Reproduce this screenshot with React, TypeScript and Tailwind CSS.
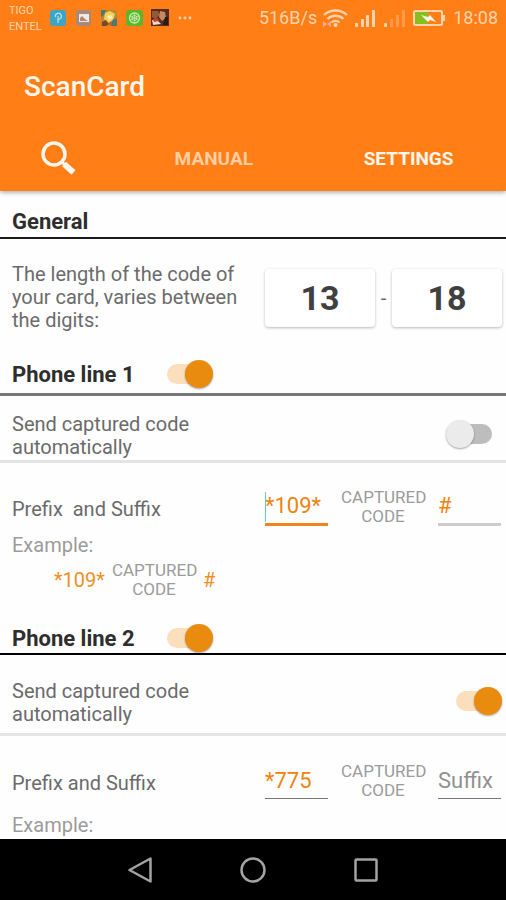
import { useState } from 'react';
import clsx from 'clsx';

interface PhoneLine {
  id: string;
  title: string;
  fieldsLabel: string;
  auto: boolean;
  prefix: string;
  suffix: string;
  focused?: boolean;
  classes: {
    header: string;
    send: string;
    sendSwitch: string;
    fields: string;
    prefix: string;
    suffix: string;
    example: string;
  };
}

const LINES: PhoneLine[] = [
  {
    id: 'line1',
    title: 'Phone line 1',
    fieldsLabel: 'Prefix  and Suffix',
    auto: false,
    prefix: '*109*',
    suffix: '#',
    focused: true,
    classes: {
      header: 'h-[41px] border-b-[3px] border-[#777777]',
      send: 'pt-[17px] pb-px',
      sendSwitch: 'mr-2.5',
      fields: 'pt-[25px]',
      prefix: 'h-[38px] border-b-[3px] border-[#f5821f]',
      suffix: 'h-[38px] border-b-[3px] border-[#cccccc]',
      example: 'pt-2',
    },
  },
  {
    id: 'line2',
    title: 'Phone line 2',
    fieldsLabel: 'Prefix and Suffix',
    auto: true,
    prefix: '*775',
    suffix: '',
    classes: {
      header: 'h-8 border-b-2 border-black',
      send: 'pt-[25px] pb-[7px]',
      sendSwitch: '',
      fields: 'pt-[26px]',
      prefix: 'h-9 border-b border-[#777777]',
      suffix: 'h-9 border-b border-[#777777]',
      example: 'pt-3.5',
    },
  },
];

function Switch({ label, on, className }: { label: string; on: boolean; className?: string }) {
  const [checked, setChecked] = useState(on);
  return (
    <input
      type="checkbox"
      role="switch"
      aria-label={label}
      checked={checked}
      onChange={(e) => setChecked(e.target.checked)}
      className={clsx(
        "relative h-7 w-[46px] shrink-0 appearance-none before:absolute before:inset-x-0 before:inset-y-1 before:rounded-full before:bg-[#bdbdbd] before:content-[''] after:absolute after:top-0 after:left-0 after:size-7 after:rounded-full after:bg-[#ebebeb] after:shadow-[0_1px_2px_rgba(0,0,0,0.35)] after:content-[''] checked:before:bg-[#fbdfbd] checked:after:left-[18px] checked:after:bg-[#e98b0e]",
        className,
      )}
    />
  );
}

function CapturedCode() {
  return (
    <span className="w-[84px] text-center text-[17px] leading-[19px] text-[#9b9b9b]">
      CAPTURED CODE
    </span>
  );
}

function PhoneLineSection({ line }: { line: PhoneLine }) {
  const [prefix, setPrefix] = useState(line.prefix);
  const [suffix, setSuffix] = useState(line.suffix);
  const c = line.classes;
  const field = 'w-full min-w-0 text-[22px] text-[#f0820f] placeholder-[#919191] outline-none';

  return (
    <section>
      <div className={clsx('flex items-center gap-8 px-3', c.header)}>
        <h2 className="text-[22px] font-bold text-[#2e2e2e]">{line.title}</h2>
        <Switch label={line.title} on />
      </div>
      <div
        className={clsx(
          'flex items-center justify-between border-b-[3px] border-[#e4e4e4] pr-1 pl-3',
          c.send,
        )}
      >
        <p className="w-[220px] text-xl leading-[23px] text-[#6b6b6b]">
          Send captured code automatically
        </p>
        <Switch
          label="Send captured code automatically"
          on={line.auto}
          className={clsx('mb-1', c.sendSwitch)}
        />
      </div>
      <div className={clsx('flex items-center justify-between pr-[5px] pl-3', c.fields)}>
        <p className="pt-1 text-xl leading-[23px] whitespace-pre text-[#6b6b6b]">
          {line.fieldsLabel}
        </p>
        <div className="flex items-center gap-[13px]">
          <div className="relative flex w-[63px]">
            <input
              aria-label={`${line.title} prefix`}
              placeholder="Prefix"
              value={prefix}
              onChange={(e) => setPrefix(e.target.value)}
              className={clsx(field, c.prefix)}
            />
            {line.focused && <span className="absolute top-1 left-0 h-[30px] w-px bg-[#5fd0c8]" />}
          </div>
          <CapturedCode />
          <div className="flex w-[63px]">
            <input
              aria-label={`${line.title} suffix`}
              placeholder="Suffix"
              value={suffix}
              onChange={(e) => setSuffix(e.target.value)}
              className={clsx(field, c.suffix)}
            />
          </div>
        </div>
      </div>
      <div className={clsx('px-3', c.example)}>
        <p className="text-xl leading-[23px] text-[#9b9b9b]">Example:</p>
        {prefix && suffix && (
          <div className="flex items-center gap-[7px] pt-1 pb-6 pl-[42px] text-xl text-[#f0901f]">
            <span>{prefix}</span>
            <CapturedCode />
            <span>{suffix}</span>
          </div>
        )}
      </div>
    </section>
  );
}

function CodeLength({ label, initial }: { label: string; initial: string }) {
  const [value, setValue] = useState(initial);
  return (
    <input
      aria-label={label}
      inputMode="numeric"
      value={value}
      onChange={(e) => setValue(e.target.value)}
      className="h-[58px] w-[110px] rounded-sm bg-white text-center text-[34px] font-bold text-[#404040] shadow-[0_1px_3px_rgba(0,0,0,0.28)] outline-none"
    />
  );
}

function StatusBar() {
  return (
    <div className="flex h-9 items-center justify-between pr-2 pl-[9px] text-[#ffd3ae]">
      <div className="flex items-center gap-2">
        <span className="w-[33px] pt-0.5 text-[11px] leading-4">
          TIGO
          <br />
          ENTEL
        </span>
        <svg viewBox="0 0 128 20" className="h-5 w-32" aria-hidden="true">
          <rect x="0" y="2" width="16" height="16" rx="3" fill="#3fa5c4" />
          <path d="M5.500 9a3 3 0 1 1 4 2l-1.500 1v3M8 8v4" fill="none" stroke="#b6e2ec" strokeWidth="1.200" />
          <rect x="26" y="2" width="15" height="16" rx="2" fill="#a98a78" />
          <rect x="29" y="6" width="10" height="8" fill="#f4e9e2" />
          <path d="M30 13v-3l2-2 3 3 3 2z" fill="#a98a78" />
          <rect x="51" y="2" width="16" height="16" fill="#b58a3d" />
          <path d="M51 2h5l-2 5-3 2zM62 12l5-2v8h-6z" fill="#4d7a6a" />
          <path d="M55 5l5-2 5 3-2 6-5 3-4-4z" fill="#f5cf57" />
          <path d="M57 8l4-1 2 3-4 2z" fill="#fce9bd" />
          <path d="M52 14l4-2 3 4-3 2h-4z" fill="#784a27" />
          <path d="M57 16l4-2 1 3z" fill="#d94f2c" />
          <rect x="76" y="2" width="17" height="16" rx="3" fill="#5cb52a" />
          <circle cx="84.500" cy="10" r="5" fill="none" stroke="#c5ecad" strokeWidth="1.300" />
          <circle cx="84.500" cy="10" r="2.500" fill="none" stroke="#c5ecad" />
          <path d="M84.500 5v10M80 8l9 4M80 12l9-4" stroke="#c5ecad" strokeWidth="0.700" />
          <rect x="101" y="1" width="18" height="17" fill="#5a2d1c" />
          <path d="M102 3h6l2 4-5 4-3-2z" fill="#92593a" />
          <path d="M110 3l5 1 1 6-4 3-3-4z" fill="#c48a66" />
          <path d="M102 12l6 1 3 3-8 1z" fill="#ecd9cd" />
          <path d="M103 11l5-1 1 3-5 1z" fill="#cf3c2c" />
          <path d="M115 9h3v8h-5z" fill="#2b1a14" />
        </svg>
        <svg viewBox="0 0 16 4" className="-ml-2 h-1 w-4" fill="currentColor" aria-hidden="true">
          <circle cx="2" cy="2" r="1.400" />
          <circle cx="7" cy="2" r="1.400" />
          <circle cx="12" cy="2" r="1.400" />
        </svg>
      </div>
      <div className="flex items-center gap-1.5 text-lg">
        <span>516B/s</span>
        <svg viewBox="0 0 124 20" className="h-5 w-[124px]" fill="none" aria-hidden="true">
          <g stroke="currentColor" strokeWidth="2.300">
            <path d="M1 7a17 17 0 0 1 23 0" />
            <path d="M4.500 11a11.500 11.500 0 0 1 16 0" />
            <path d="M8.500 14.500a6 6 0 0 1 8 0" />
          </g>
          <circle cx="12.500" cy="17" r="2" fill="currentColor" />
          <path d="M0 13l4 3-4 3z" fill="#ffa98c" />
          <path d="M8 13v6l-4-3z" fill="#ffa98c" />
          <g fill="currentColor">
            <rect x="32" y="15" width="3" height="4" rx="1" />
            <rect x="38" y="11" width="3" height="8" />
            <rect x="43" y="7" width="3" height="12" />
            <rect x="49" y="2" width="3" height="17" />
            <rect x="61" y="15" width="3" height="4" rx="1" />
          </g>
          <g fill="#ff9a4c">
            <rect x="67" y="11" width="3" height="8" />
            <rect x="73" y="7" width="3" height="12" />
            <rect x="79" y="2" width="3" height="17" />
          </g>
          <rect x="91" y="3" width="28" height="14" rx="1.500" stroke="currentColor" strokeWidth="2" />
          <rect x="120" y="7" width="2" height="6" fill="currentColor" />
          <rect x="92" y="4" width="13" height="12" fill="#86bf1f" />
          <path d="M98 7l7 2 2-2 6 7-6-2-2 2z" fill="#fff3e6" />
        </svg>
        <span>18:08</span>
      </div>
    </div>
  );
}

export default function App() {
  return (
    <div className="flex h-screen flex-col overflow-hidden bg-[#fefefe] font-[Roboto,sans-serif]">
      <header className="relative z-10 shrink-0 bg-[#ff7f16] shadow-[0_1px_5px_rgba(0,0,0,0.4)]">
        <StatusBar />
        <h1 className="px-6 pt-[33px] text-[28px] leading-9 font-medium text-[#fff6ee]">ScanCard</h1>
        <nav className="mt-5 flex h-[66px] items-center pt-0.5 text-[19px] font-bold">
          <button aria-label="Scan" className="flex w-[23%] justify-center">
            <svg viewBox="0 0 36 36" className="size-9" fill="none" stroke="#fff6ee" aria-hidden="true">
              <circle cx="14" cy="13" r="11" strokeWidth="3.500" />
              <path d="M21.500 20.500l4 4" strokeWidth="3" />
              <path d="M24 23l9.500 8.500" strokeWidth="6" />
            </svg>
          </button>
          <button className="flex-1 text-[#ffcda2]">MANUAL</button>
          <button className="flex-1 text-[#fff6ee]">SETTINGS</button>
        </nav>
      </header>

      <main className="min-h-0 flex-1 overflow-hidden">
        <h2 className="border-b-2 border-[#1c1c1c] px-3 pt-4 text-[22px] leading-[30px] font-bold text-[#2e2e2e]">
          General
        </h2>
        <div className="flex items-center justify-between pt-6 pr-1 pb-[23px] pl-3">
          <p className="w-[240px] text-xl leading-[23px] text-[#6b6b6b]">
            The length of the code of your card, varies between the digits:
          </p>
          <div className="flex items-center text-[#6b6b6b]">
            <CodeLength label="Minimum digits" initial="13" />
            <span className="w-[17px] text-center text-xl">-</span>
            <CodeLength label="Maximum digits" initial="18" />
          </div>
        </div>
        {LINES.map((line) => (
          <PhoneLineSection key={line.id} line={line} />
        ))}
      </main>

      <nav className="flex h-[61px] shrink-0 items-center justify-center gap-[85px] bg-black text-[#a3a3a3]">
        <button aria-label="Back">
          <svg viewBox="0 0 28 28" className="size-7" fill="none" stroke="currentColor" strokeWidth="2.500" aria-hidden="true">
            <path d="M24.500 2.500v23L3.500 14z" strokeLinejoin="round" />
          </svg>
        </button>
        <button aria-label="Home">
          <svg viewBox="0 0 28 28" className="size-7" fill="none" stroke="currentColor" strokeWidth="2.500" aria-hidden="true">
            <circle cx="14" cy="14" r="11.500" />
          </svg>
        </button>
        <button aria-label="Recent apps">
          <svg viewBox="0 0 28 28" className="size-7" fill="none" stroke="currentColor" strokeWidth="2.500" aria-hidden="true">
            <rect x="3.500" y="3.500" width="21" height="21" rx="1" />
          </svg>
        </button>
      </nav>
    </div>
  );
}
